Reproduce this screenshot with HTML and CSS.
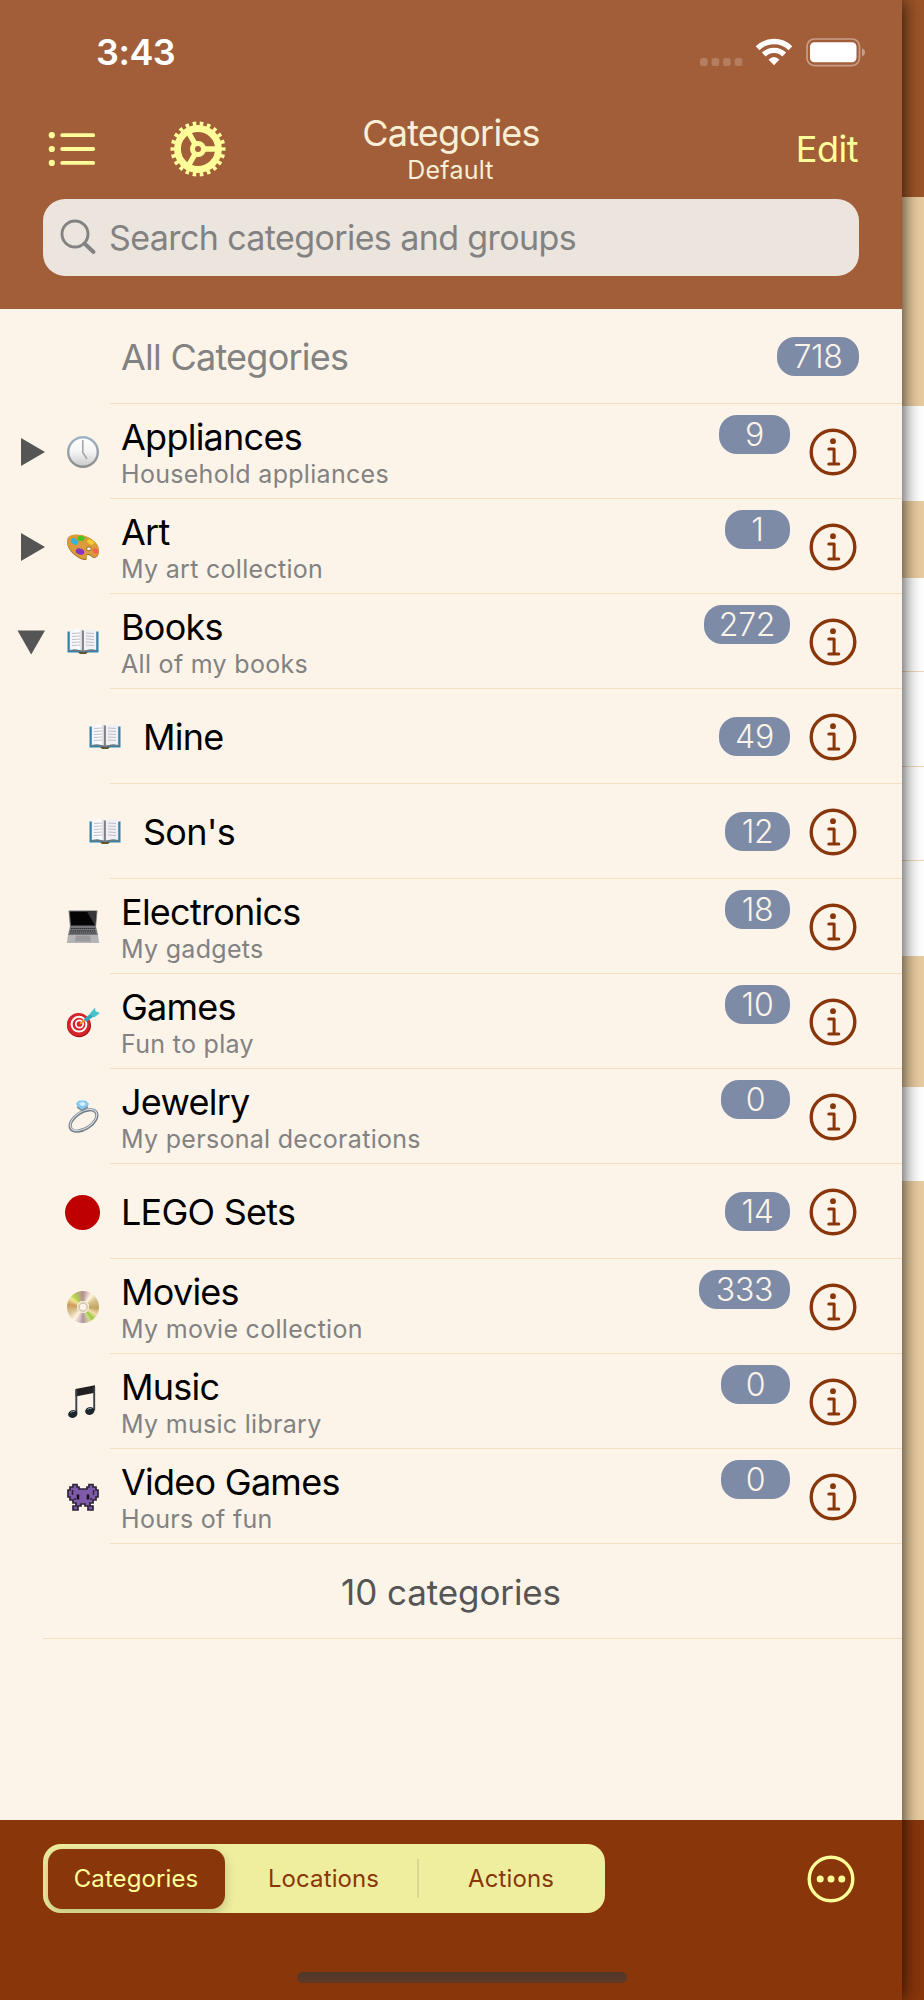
FILE: index.html
```html
<!DOCTYPE html>
<html lang="en">
<head>
    <meta charset="UTF-8">
    <meta name="viewport" content="width=device-width, initial-scale=1.0">
    <title>Categories</title>
    <link rel="stylesheet" href="styles.css">
</head>
<body>
    <!-- Shared icons -->
    <svg class="defs" width="0" height="0">
        <linearGradient id="silver" x1="0" y1="0" x2="0" y2="1">
            <stop offset="0" stop-color="#fff"/><stop offset="0.5" stop-color="#f4f4f4"/><stop offset="1" stop-color="#c9c9c9"/>
        </linearGradient>
        <linearGradient id="rim" x1="0" y1="0" x2="0" y2="1">
            <stop offset="0" stop-color="#9fb2c6"/><stop offset="1" stop-color="#8d8d8f"/>
        </linearGradient>
        <linearGradient id="page" x1="0" y1="0" x2="1" y2="0">
            <stop offset="0" stop-color="#f4f2f6"/><stop offset="0.7" stop-color="#fff"/><stop offset="1" stop-color="#bdbcc4"/>
        </linearGradient>
        <symbol id="info" viewBox="-24 -24 48 48">
            <circle r="21.8" fill="none" stroke="#89360b" stroke-width="3.4"/>
            <circle cy="-10.8" r="2.9" fill="#89360b"/>
            <path d="M-4.2 -3H1.1V12M-4.2 12H5.8" fill="none" stroke="#89360b" stroke-width="3" stroke-linecap="round" stroke-linejoin="round"/>
        </symbol>
        <symbol id="book" viewBox="0 0 34 34">
            <path d="M1.500 6.500H32.500V27.500H1.500Z" fill="#3584a8"/>
            <path d="M12 27H22L20 29H14Z" fill="#5c5530"/>
            <path d="M3.800 5Q12 3.500 17 5.500V26Q11 23.500 3.800 25Z" fill="url(#page)"/>
            <path d="M30.200 5Q22 3.500 17 5.500V26Q23 23.500 30.200 25Z" fill="#f1f0f5"/>
            <path d="M17 5.500V26" stroke="#77767e" stroke-width="1.700"/>
            <path d="M6 8.500L14 8M6 11.500L14 11M6 14.500L14 14M6 17.500L14 17M6 20.500L14 20M20 8L28 8.500M20 11L28 11.500M20 14L28 14.500M20 17L28 17.500M20 20L28 20.500" stroke="#c0bfca" stroke-width="1"/>
            <path d="M3.800 25.700Q11 24.200 17 26.700Q23 24.200 30.200 25.700" fill="none" stroke="#77777d" stroke-width="1.300"/>
        </symbol>
    </svg>

    <div class="screen">
        <main class="panel">
            <header class="header">
                <div class="status">
                    <span class="time">3:43</span>
                    <div class="status-icons">
                        <svg class="dots" width="43" height="8" viewBox="0 0 43 8" fill="#b67e61">
                            <rect width="7.600" height="8" rx="2.500"/><rect x="11.600" width="7.600" height="8" rx="2.500"/><rect x="23.100" width="7.600" height="8" rx="2.500"/><rect x="34.700" width="7.600" height="8" rx="2.500"/>
                        </svg>
                        <svg class="wifi" width="38" height="28" viewBox="0 0 38 28" fill="none" stroke="#fff" stroke-width="5.400">
                            <path d="M2.600 10.200A23.600 23.600 0 0 1 35.400 10.200"/>
                            <path d="M8.800 16.500A14.700 14.700 0 0 1 29.200 16.500"/>
                            <path d="M19 27.200L13.500 21.500Q19 16.500 24.500 21.500Z" fill="#fff" stroke="none"/>
                        </svg>
                        <svg width="60" height="29" viewBox="0 0 60 29">
                            <rect x="1" y="1" width="52.500" height="26.600" rx="7.500" fill="none" stroke="#c79e89" stroke-width="1.700"/>
                            <rect x="4" y="4.200" width="46.500" height="20" rx="4.500" fill="#fff"/>
                            <path d="M56 10.200Q59 11.500 59 14.300Q59 17.200 56 18.500Z" fill="#c79e89"/>
                        </svg>
                    </div>
                </div>

                <div class="nav">
                    <div class="nav-left">
                        <svg width="48" height="36" viewBox="0 0 48 36" fill="#ffff99">
                            <circle cx="3.800" cy="4.200" r="3.100"/><circle cx="3.800" cy="18" r="3.100"/><circle cx="3.800" cy="31.900" r="3.100"/>
                            <path d="M14.200 4.200H45.200M14.200 18H45.200M14.200 31.900H45.200" stroke="#ffff99" stroke-width="3.800" stroke-linecap="round"/>
                        </svg>
                        <svg width="56" height="56" viewBox="-28 -28 56 56" fill="none" stroke="#ffff99">
                            <circle r="20.500" stroke-width="6.800"/>
                            <circle r="25" stroke-width="5" pathLength="220" stroke-dasharray="5 5" stroke-dashoffset="2.500"/>
                            <circle r="5.500" stroke-width="5"/>
                            <path d="M6 0H19M-3 5.200L-9.500 16.500M-3 -5.200L-9.500 -16.500" stroke-width="5.400"/>
                        </svg>
                    </div>
                    <div class="nav-title">
                        <h1>Categories</h1>
                        <p>Default</p>
                    </div>
                    <a class="edit">Edit</a>
                </div>

                <div class="search">
                    <svg width="38" height="38" viewBox="0 0 38 38" fill="none" stroke="#828282">
                        <circle cx="15" cy="15" r="13" stroke-width="2.900"/>
                        <path d="M24.500 24.500L33.500 33" stroke-width="4" stroke-linecap="round"/>
                    </svg>
                    <span>Search categories and groups</span>
                </div>
            </header>

            <ul class="list">
                <li class="row all">
                    <div class="lead"></div>
                    <div class="text"><span class="name">All Categories</span></div>
                    <span class="badge w82">718</span>
                </li>
                <li class="row sub">
                    <div class="lead">
                        <svg class="arrow" width="28" height="28" viewBox="0 0 28 28"><path d="M4 0V28L28 14Z" fill="#555"/></svg>
                        <svg class="icon" viewBox="0 0 34 34">
                            <circle cx="17" cy="17" r="14.800" fill="url(#silver)" stroke="url(#rim)" stroke-width="2.400"/>
                            <path d="M16.800 5V17.500L21 24" fill="none" stroke="#a2a2a2" stroke-width="1.500"/>
                        </svg>
                    </div>
                    <div class="text"><span class="name">Appliances</span><span class="desc">Household appliances</span></div>
                    <span class="badge w71">9</span>
                    <svg class="info"><use href="#info"/></svg>
                </li>
                <li class="row sub">
                    <div class="lead">
                        <svg class="arrow" width="28" height="28" viewBox="0 0 28 28"><path d="M4 0V28L28 14Z" fill="#555"/></svg>
                        <svg class="icon" viewBox="0 0 34 34">
                            <path d="M1 12C1 6 8 4 16 5.500C25 7.500 33 14 33 21C33 25 31 28 28 28C26 28 25 25 22 25C19 25 22 29 20 30C15 31 1 22 1 12Z" fill="#a66b20"/>
                            <path d="M1 11C1 5 8 3.500 16 5C25 7 33 13 33 20C33 24 31 27 28.500 27C26 27 25 24 22 24C19 24 22 28 20 29C15 30 1 21 1 11Z" fill="#d99b3b"/>
                            <ellipse cx="8.500" cy="11.500" rx="4" ry="2.800" transform="rotate(35 8.500 11.500)" fill="#35b5df"/>
                            <ellipse cx="15" cy="8.300" rx="3.600" ry="2.600" fill="#4cc424"/>
                            <ellipse cx="24.500" cy="12" rx="3.600" ry="2.200" transform="rotate(30 24.500 12)" fill="#f1ce2d"/>
                            <ellipse cx="29.500" cy="21" rx="3" ry="2.300" transform="rotate(35 29.500 21)" fill="#f26355"/>
                            <ellipse cx="14" cy="21.500" rx="4.400" ry="3" transform="rotate(20 14 21.500)" fill="#8732c4"/>
                            <ellipse cx="22.800" cy="18.800" rx="2.400" ry="1.900" fill="#fcf4e8" stroke="#9c671f"/>
                        </svg>
                    </div>
                    <div class="text"><span class="name">Art</span><span class="desc">My art collection</span></div>
                    <span class="badge w65">1</span>
                    <svg class="info"><use href="#info"/></svg>
                </li>
                <li class="row sub">
                    <div class="lead">
                        <svg class="arrow" width="28" height="28" viewBox="0 0 28 28"><path d="M0.500 2.500H28L14.200 26.500Z" fill="#555"/></svg>
                        <svg class="icon"><use href="#book"/></svg>
                    </div>
                    <div class="text"><span class="name">Books</span><span class="desc">All of my books</span></div>
                    <span class="badge w86">272</span>
                    <svg class="info"><use href="#info"/></svg>
                </li>
                <li class="row child">
                    <div class="lead"><svg class="icon"><use href="#book"/></svg></div>
                    <div class="text"><span class="name">Mine</span></div>
                    <span class="badge w71">49</span>
                    <svg class="info"><use href="#info"/></svg>
                </li>
                <li class="row child">
                    <div class="lead"><svg class="icon"><use href="#book"/></svg></div>
                    <div class="text"><span class="name">Son's</span></div>
                    <span class="badge w65">12</span>
                    <svg class="info"><use href="#info"/></svg>
                </li>
                <li class="row sub">
                    <div class="lead">
                        <svg class="icon" viewBox="0 0 34 34">
                            <path d="M2.500 0.500H31.500L30 17H4Z" fill="#707276"/>
                            <path d="M3.800 1.500H30.200L29 15.500H5Z" fill="#050505"/>
                            <path d="M21 1.500H30.200L29 15.500Z" fill="#34363b"/>
                            <path d="M4 16.500H30L32 25H2Z" fill="#77787c"/>
                            <path d="M5 18.500H29M4.500 20.800H29.500M4 23H30" stroke="#303135" stroke-width="1.200" stroke-dasharray="1.600 0.500"/>
                            <path d="M2 25H32L33.200 33H0.800Z" fill="#b4b4b6"/>
                            <path d="M10 25.500H24L25 31.500H9Z" fill="#9a9a9d"/>
                        </svg>
                    </div>
                    <div class="text"><span class="name">Electronics</span><span class="desc">My gadgets</span></div>
                    <span class="badge w65">18</span>
                    <svg class="info"><use href="#info"/></svg>
                </li>
                <li class="row sub">
                    <div class="lead">
                        <svg class="icon" viewBox="0 0 34 34">
                            <ellipse cx="13" cy="20.500" rx="12" ry="11.700" fill="#a41217"/>
                            <circle cx="12.500" cy="19.500" r="11.500" fill="#d7232a"/>
                            <circle cx="13" cy="19.200" r="7.400" fill="none" stroke="#fff" stroke-width="2"/>
                            <circle cx="13.500" cy="19" r="3.700" fill="none" stroke="#fff" stroke-width="1.700"/>
                            <path d="M14 18.800L20 14.500" stroke="#d9a42c" stroke-width="2"/>
                            <path d="M19 15.500L28 8.500" stroke="#2fa9b5" stroke-width="4"/>
                            <path d="M23.500 9L29 2.500L29.500 6.300L34 8L28 12.500Z" fill="#48c3cc"/>
                        </svg>
                    </div>
                    <div class="text"><span class="name">Games</span><span class="desc">Fun to play</span></div>
                    <span class="badge w65">10</span>
                    <svg class="info"><use href="#info"/></svg>
                </li>
                <li class="row sub">
                    <div class="lead">
                        <svg class="icon" viewBox="0 1 34 34">
                            <ellipse cx="17.500" cy="21.500" rx="15" ry="8.300" transform="rotate(-33 17.500 21.500)" fill="none" stroke="#6f7b86" stroke-width="3.200"/>
                            <ellipse cx="17.500" cy="21" rx="14.800" ry="8.300" transform="rotate(-33 17.500 21)" fill="none" stroke="#cfd7de" stroke-width="1.300"/>
                            <path d="M10 4.500L13 1.500H19.500L23 4.800L21 9L16 11L12 9Z" fill="#84c8f1"/>
                            <path d="M12.500 4.500L17 2.800L20 5L16.500 7.500Z" fill="#d3f0ff"/>
                            <path d="M11 8L16 11.500L22 8" fill="none" stroke="#7c8993" stroke-width="1.500"/>
                        </svg>
                    </div>
                    <div class="text"><span class="name">Jewelry</span><span class="desc">My personal decorations</span></div>
                    <span class="badge w69">0</span>
                    <svg class="info"><use href="#info"/></svg>
                </li>
                <li class="row">
                    <div class="lead"><span class="dot"></span></div>
                    <div class="text"><span class="name">LEGO Sets</span></div>
                    <span class="badge w65">14</span>
                    <svg class="info"><use href="#info"/></svg>
                </li>
                <li class="row sub">
                    <div class="lead"><span class="disc"></span></div>
                    <div class="text"><span class="name">Movies</span><span class="desc">My movie collection</span></div>
                    <span class="badge w91">333</span>
                    <svg class="info"><use href="#info"/></svg>
                </li>
                <li class="row sub">
                    <div class="lead">
                        <svg class="icon" viewBox="0 0 34 34">
                            <path d="M9.500 4L29 0.200V7.800L9.500 11.500Z" fill="#211f22"/>
                            <path d="M10.300 5V28M28.200 2V25.500" stroke="#39424a" stroke-width="1.900"/>
                            <ellipse cx="6.800" cy="29" rx="4.700" ry="3.800" transform="rotate(-15 6.800 29)" fill="#1e262d"/>
                            <ellipse cx="23.800" cy="26" rx="4.700" ry="3.800" transform="rotate(-15 23.800 26)" fill="#1e262d"/>
                            <path d="M4.500 27.500Q6.500 25.500 8.500 26.500M21.500 24.500Q23.500 22.500 25.500 23.500" fill="none" stroke="#9fb0bd" stroke-width="1"/>
                        </svg>
                    </div>
                    <div class="text"><span class="name">Music</span><span class="desc">My music library</span></div>
                    <span class="badge w69">0</span>
                    <svg class="info"><use href="#info"/></svg>
                </li>
                <li class="row sub">
                    <div class="lead">
                        <svg class="icon" viewBox="0 0 34 34">
                            <path d="M7 4.500H11V7H13V9H21V7H23V4.500H27V7H30V10H32V17H30V20H27V23H24V26H27V30H22V26H19V24H15V26H12V30H7V26H10V23H7V20H4V17H2V10H4V7H7Z" fill="#7e5aa9" stroke="#2e2438" stroke-width="1.700"/>
                            <path d="M6.500 10V15M27.500 10V15M8 19H10M24 19H26" stroke="#2e2438" stroke-width="1.500"/>
                            <path d="M12 14.500V19.500M22 14.500V19.500" stroke="#17111c" stroke-width="2.500"/>
                        </svg>
                    </div>
                    <div class="text"><span class="name">Video Games</span><span class="desc">Hours of fun</span></div>
                    <span class="badge w69">0</span>
                    <svg class="info"><use href="#info"/></svg>
                </li>
                <li class="row total">10 categories</li>
            </ul>

            <footer class="footer">
                <div class="toolbar">
                    <div class="segments">
                        <span class="segment active">Categories</span>
                        <span class="segment middle">Locations</span>
                        <span class="segment last">Actions</span>
                    </div>
                    <svg width="48" height="48" viewBox="-24 -24 48 48" fill="#ffff99">
                        <circle r="21.800" fill="none" stroke="#ffff99" stroke-width="3.400"/>
                        <circle cx="-10.800" r="3.500"/><circle r="3.500"/><circle cx="10.800" r="3.500"/>
                    </svg>
                </div>
                <div class="home-bar"></div>
            </footer>
        </main>

        <!-- Edge of the page behind the panel -->
        <aside class="behind">
            <div class="bar"></div>
            <div class="section first"></div>
            <div class="item"></div>
            <div class="section second"></div>
            <div class="item line"></div>
            <div class="item line"></div>
            <div class="item line"></div>
            <div class="item"></div>
            <div class="section third"></div>
            <div class="item"></div>
            <div class="section rest"></div>
            <div class="bottom"></div>
        </aside>
    </div>
</body>
</html>
```
FILE: styles.css
```css
body {
    margin: 0;
    font-family: Inter, "Liberation Sans", sans-serif;
    background: #fcf4e9;
}
h1, p, ul {
    margin: 0;
    padding: 0;
    font-weight: 400;
}
svg {
    display: block;
    flex: none;
}
.defs {
    position: absolute;
}
.screen {
    display: flex;
    width: 924px;
    height: 2000px;
    overflow: hidden;
}
.panel {
    display: flex;
    flex-direction: column;
    position: relative;
    z-index: 1;
    width: 902px;
    flex: none;
    background: #fcf4e9;
    box-shadow: 0 0 18px rgba(0, 0, 0, 0.85);
}

/* Header */
.header {
    box-sizing: border-box;
    height: 309px;
    background: #a15e38;
}
.status {
    display: flex;
    justify-content: space-between;
    box-sizing: border-box;
    height: 112px;
    padding: 31px 36px 0 96px;
}
.time {
    font-size: 36px;
    font-weight: 600;
    line-height: 43px;
    letter-spacing: -0.5px;
    color: #fff;
}
.status-icons {
    display: flex;
    align-items: flex-start;
    padding-top: 7px;
}
.dots {
    margin-top: 20px;
}
.wifi {
    margin: 0 13px 0 12px;
}
.nav {
    display: grid;
    grid-template-columns: 200px 1fr 200px;
    align-items: center;
    height: 74px;
    padding: 0 44px 0 48px;
}
.nav-left {
    display: flex;
    align-items: center;
    gap: 74px;
}
.nav-title {
    text-align: center;
    color: #f8efd6;
    margin-right: 4px;
}
.nav-title h1 {
    font-size: 36px;
    line-height: 41px;
    letter-spacing: -0.8px;
}
.nav-title p {
    font-size: 25px;
    line-height: 32px;
    letter-spacing: 0.2px;
    margin-right: 1px;
}
.edit {
    text-align: right;
    font-size: 36px;
    letter-spacing: -0.5px;
    color: #ffff99;
}
.search {
    display: flex;
    align-items: center;
    gap: 11px;
    height: 77px;
    margin: 13px 43px 0;
    padding-left: 17px;
    border-radius: 22px;
    background: #ece5de;
    font-size: 34px;
    letter-spacing: -0.6px;
    color: #828282;
}

/* Category list */
.list {
    flex: 1;
    list-style: none;
}
.row {
    display: flex;
    align-items: center;
    box-sizing: border-box;
    height: 95px;
    padding-right: 43px;
    background: linear-gradient(#f6dfc0, #f6dfc0) 110px 100% / 100% 1px no-repeat;
}
.lead {
    display: flex;
    align-items: center;
    justify-content: flex-end;
    gap: 20.500px;
    box-sizing: border-box;
    width: 121px;
    padding: 1px 21.500px 0 0;
    flex: none;
}
.icon {
    width: 34px;
    height: 34px;
}
.arrow {
    margin-top: -1px;
}
.child .lead {
    width: 143px;
}
.text {
    display: flex;
    flex-direction: column;
    flex: 1;
    padding-top: 2px;
}
.name {
    font-size: 36px;
    line-height: 43px;
    letter-spacing: -0.75px;
    color: #000;
}
.all .name {
    color: #828282;
}
.desc {
    font-size: 25px;
    line-height: 30px;
    letter-spacing: 0.3px;
    color: #828282;
}
.badge {
    height: 39px;
    border-radius: 18px;
    background: #7d8ba7;
    color: #fcf4e9;
    font-size: 32px;
    font-weight: 350;
    line-height: 39px;
    letter-spacing: -0.3px;
    text-align: center;
}
.sub .badge {
    align-self: flex-start;
    margin-top: 11px;
}
.w65 { width: 65px; }
.w69 { width: 69px; }
.w71 { width: 71px; }
.w82 { width: 82px; }
.w86 { width: 86px; }
.w91 { width: 91px; }
.info {
    width: 48px;
    height: 48px;
    margin-left: 19px;
    margin-right: 2px;
}
.dot {
    width: 35px;
    height: 35px;
    border-radius: 50%;
    background: #be0000;
}
.disc {
    width: 32px;
    height: 32px;
    margin-right: 1px;
    border-radius: 50%;
    background:
        radial-gradient(#fcf4e9 0 3px, #d8cdb5 3.500px 4.500px, #efe8d2 5px 6px, transparent 6.500px),
        conic-gradient(#b58f94, #fff8df 35deg, #d9c391 60deg, #c4a35f 95deg, #f1dfae 120deg, #9bcb3f 140deg, #cfd98f 155deg, #b394a4 180deg, #fff6df 215deg, #d9c79a 245deg, #cf9a5c 280deg, #f2e79a 305deg, #b5d84b 320deg, #b58f94);
}
.total {
    justify-content: center;
    padding: 0;
    font-size: 35px;
    letter-spacing: -0.1px;
    color: #555;
    background-position: 43px 100%;
}

/* Bottom toolbar */
.footer {
    box-sizing: border-box;
    height: 180px;
    padding: 24px 47px 0 43px;
    background: #89360b;
}
.toolbar {
    display: flex;
    align-items: center;
    justify-content: space-between;
}
.segments {
    display: grid;
    grid-template-columns: 177px 1fr 184px;
    box-sizing: border-box;
    width: 562px;
    height: 69px;
    padding: 4.500px;
    border-radius: 18px;
    overflow: hidden;
    background: #efee9e;
}
.segment {
    display: flex;
    align-items: center;
    justify-content: center;
    font-size: 24px;
    letter-spacing: 0.1px;
    color: #89360b;
}
.active {
    border-radius: 14px;
    background: #89360b;
    color: #ffff99;
    box-shadow: 0 4px 12px rgba(0, 0, 0, 0.2);
}
.middle {
    padding-left: 6px;
}
.last {
    padding-left: 5px;
    background: linear-gradient(#d9d592, #d9d592) 0 50% / 2px 39px no-repeat;
}
.home-bar {
    width: 330px;
    height: 11px;
    margin: 59px 0 0 254px;
    border-radius: 6px;
    background: linear-gradient(#50382c, #5f3926);
}

/* Strip on the right */
.behind {
    flex: 1;
}
.bar { height: 197px; background: #9c5427; }
.section { background: #e9cda1; }
.first { height: 209px; }
.second { height: 77px; }
.third { height: 131px; }
.rest { height: 639px; }
.item {
    box-sizing: border-box;
    height: 94.500px;
    background: #fff;
}
.line { border-bottom: 1px solid #f0d9b5; }
.bottom { height: 180px; background: #89360b; }
```
